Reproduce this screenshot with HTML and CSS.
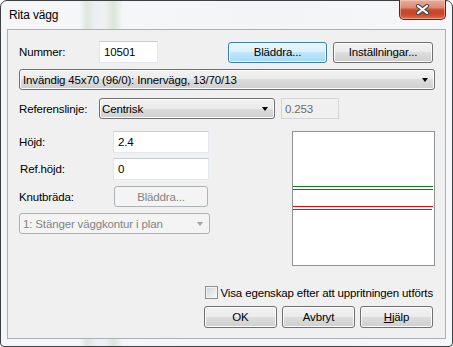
FILE: index.html
```html
<!DOCTYPE html>
<html lang="sv">
<head>
    <meta charset="UTF-8">
    <title>Rita vägg</title>
    <link rel="stylesheet" href="styles.css">
</head>
<body>
    <div class="window">
        <div class="titlebar">
            <span class="title">Rita vägg</span>
            <button class="close-button">
                <svg width="15" height="11" viewBox="0 0 15 11">
                    <path d="M3 2 L12 9 M12 2 L3 9" stroke="#4a4a4a" stroke-width="4.2" stroke-linecap="round"/>
                    <path d="M3 2 L12 9 M12 2 L3 9" stroke="#fff" stroke-width="2.2" stroke-linecap="round"/>
                </svg>
            </button>
        </div>

        <div class="client">
            <div class="row number-row">
                <span class="label">Nummer:</span>
                <input class="text-field number-field" type="text" value="10501">
                <button class="button default-button browse-button">Bläddra...</button>
                <button class="button settings-button">Inställningar...</button>
            </div>

            <div class="row type-row">
                <div class="combo wide-combo">
                    <span>Invändig 45x70 (96/0): Innervägg, 13/70/13</span>
                    <span class="arrow"></span>
                </div>
            </div>

            <div class="row ref-row">
                <span class="label">Referenslinje:</span>
                <div class="combo ref-combo">
                    <span>Centrisk</span>
                    <span class="arrow"></span>
                </div>
                <input class="text-field offset-field" type="text" value="0.253" disabled>
            </div>

            <div class="main">
                <div class="left-column">
                    <div class="field-row">
                        <span class="label wide-label">Höjd:</span>
                        <input class="text-field height-field" type="text" value="2.4">
                    </div>
                    <div class="field-row refheight-row">
                        <span class="label wide-label indent">Ref.höjd:</span>
                        <input class="text-field height-field" type="text" value="0">
                    </div>
                    <div class="field-row knot-row">
                        <span class="label knot-label">Knutbräda:</span>
                        <button class="button knot-button" disabled>Bläddra...</button>
                    </div>
                    <div class="combo disabled-combo">
                        <span>1: Stänger väggkontur i plan</span>
                        <span class="arrow"></span>
                    </div>
                </div>

                <div class="preview">
                    <svg width="141" height="133" viewBox="0 0 141 133">
                        <line x1="0" y1="54.5" x2="140" y2="54.5" stroke="#0b7d12" stroke-width="1"/>
                        <line x1="0" y1="57.5" x2="140" y2="57.5" stroke="#f00" stroke-width="1"/>
                        <line x1="0" y1="74.5" x2="140" y2="74.5" stroke="#f00" stroke-width="1"/>
                        <line x1="0" y1="77.5" x2="139" y2="77.5" stroke="#0b7d12" stroke-width="1"/>
                    </svg>
                </div>
            </div>

            <div class="check-row">
                <span class="checkbox"></span>
                <span>Visa egenskap efter att uppritningen utförts</span>
            </div>

            <div class="button-row">
                <button class="button dialog-button">OK</button>
                <button class="button dialog-button">Avbryt</button>
                <button class="button dialog-button"><u>H</u>jälp</button>
            </div>
        </div>
    </div>
</body>
</html>
```

FILE: styles.css
```css
body {
    margin: 0;
    font-family: 'Liberation Sans', Arial, sans-serif;
    font-size: 11.5px;
    letter-spacing: -0.15px;
    color: #000;
}

.window {
    box-sizing: border-box;
    width: 453px;
    height: 347px;
    border: 1px solid #3d4043;
    border-radius: 7px 7px 4px 4px;
    padding: 0 6px 7px;
    display: flex;
    flex-direction: column;
    background: linear-gradient(90deg, #f4f6f8 0, #f4f6f8 17.5%, #dfe7e0 19%, #eceff3 21%, #eef0f3 23%, #dbe5da 25%, #f4f6f8 27%, #f2f4f6 60%, #f6f7f9 100%);
}

.titlebar {
    height: 28px;
    display: flex;
    align-items: flex-start;
    flex-shrink: 0;
}

.title {
    padding: 7px 0 0 2px;
    line-height: 15px;
    font-size: 12px;
    color: #000;
}

.close-button {
    margin: -1px 0 0 auto;
    width: 47px;
    height: 20px;
    padding: 0;
    border: 1px solid #5e2418;
    border-top: none;
    border-radius: 0 0 5px 5px;
    background: linear-gradient(180deg, #e9ad9c 0, #dc8a74 40%, #c94a2c 52%, #c8462a 75%, #dc7150 100%);
    box-shadow: inset 0 0 0 1px rgba(255, 220, 210, 0.45);
    display: flex;
    align-items: center;
    justify-content: center;
}

.client {
    flex: 1;
    border: 1px solid #a9b1ba;
    background-color: #f0f0f0;
    padding: 0 12px 0 11px;
    display: flex;
    flex-direction: column;
}

.row {
    display: flex;
    align-items: center;
}

.label {
    width: 80px;
    flex-shrink: 0;
}

.text-field {
    box-sizing: border-box;
    height: 22px;
    margin: 0;
    padding: 0 4px;
    font-family: inherit;
    font-size: inherit;
    letter-spacing: inherit;
    color: #000;
    background-color: #fff;
    border: 1px solid;
    border-color: #c9cdd3 #e3e9ef #e3e9ef #e2e3ea;
    outline: none;
}

.button {
    box-sizing: border-box;
    height: 21px;
    margin: 0;
    padding: 0;
    font-family: inherit;
    font-size: inherit;
    letter-spacing: inherit;
    color: #000;
    border: 1px solid #707070;
    border-radius: 3px;
    background: linear-gradient(180deg, #f2f2f2 0, #ebebeb 50%, #dddddd 50%, #cfcfcf 100%);
    box-shadow: inset 0 0 0 1px #fbfbfb;
}

.button u {
    text-decoration: underline;
}

.default-button {
    border-color: #3c7fb1;
    background: linear-gradient(180deg, #eaf6fd 0, #d9f0fc 50%, #bee6fd 50%, #a7d9f5 100%);
    box-shadow: inset 0 0 0 1px #f3fafe;
}

.number-row {
    margin-top: 11px;
    height: 22px;
}

.number-field {
    width: 59px;
}

.browse-button {
    margin-left: auto;
    width: 99px;
}

.settings-button {
    margin-left: 6px;
    width: 100px;
}

.combo {
    box-sizing: border-box;
    height: 21px;
    padding-left: 3px;
    display: flex;
    align-items: center;
    border: 1px solid #707070;
    border-radius: 3px;
    background: linear-gradient(180deg, #f2f2f2 0, #ebebeb 50%, #dddddd 50%, #cfcfcf 100%);
    box-shadow: inset 0 0 0 1px #fbfbfb;
}

.arrow {
    margin-left: auto;
    margin-right: 6px;
    width: 0;
    height: 0;
    border-top: 4px solid #000;
    border-left: 3px solid transparent;
    border-right: 3px solid transparent;
}

.type-row {
    margin-top: 6px;
}

.wide-combo {
    width: 416px;
    margin-right: -2px;
}

.ref-row {
    margin-top: 8px;
    height: 21px;
}

.ref-combo {
    width: 176px;
    padding-left: 2px;
}

.offset-field {
    margin-left: 6px;
    width: 58px;
    height: 21px;
    padding-left: 3px;
    color: #6d6d6d;
    background-color: #f0f0f0;
    border-color: #d5d5d5;
}

.main {
    margin-top: 12px;
    display: flex;
    justify-content: space-between;
    align-items: flex-start;
}

.left-column {
    width: 191px;
    display: flex;
    flex-direction: column;
}

.field-row {
    display: flex;
    align-items: center;
    height: 22px;
}

.wide-label {
    width: 94px;
}

.indent {
    padding-left: 1px;
    width: 93px;
}

.height-field {
    width: 96px;
}

.refheight-row {
    margin-top: 5px;
}

.knot-row {
    margin-top: 6px;
    height: 21px;
}

.knot-label {
    width: 95px;
}

.knot-button {
    width: 94px;
    color: #838383;
    border-color: #adb2b5;
    background: #f4f4f4;
    box-shadow: none;
}

.disabled-combo {
    margin-top: 6px;
    width: 191px;
    color: #838383;
    border-color: #adb2b5;
    background: #f4f4f4;
    box-shadow: none;
}

.disabled-combo .arrow {
    border-top-color: #a3a3a3;
}

.preview {
    width: 143px;
    height: 135px;
    box-sizing: border-box;
    margin-right: -2px;
    border: 1px solid #8f9296;
    background-color: #fff;
}

.preview svg {
    display: block;
}

.check-row {
    margin-top: 20px;
    height: 13px;
    display: flex;
    align-items: center;
    justify-content: flex-end;
}

.checkbox {
    box-sizing: border-box;
    width: 13px;
    height: 13px;
    margin-right: 3px;
    border: 1px solid #8e8f8f;
    background: linear-gradient(135deg, #cdd1d6 0, #eeeff1 70%, #f7f7f7 100%);
    box-shadow: inset 0 0 0 1px #f4f4f4;
}

.button-row {
    margin-top: 7px;
    display: flex;
    justify-content: flex-end;
    gap: 5px;
}

.dialog-button {
    width: 73px;
    height: 22px;
}
```
